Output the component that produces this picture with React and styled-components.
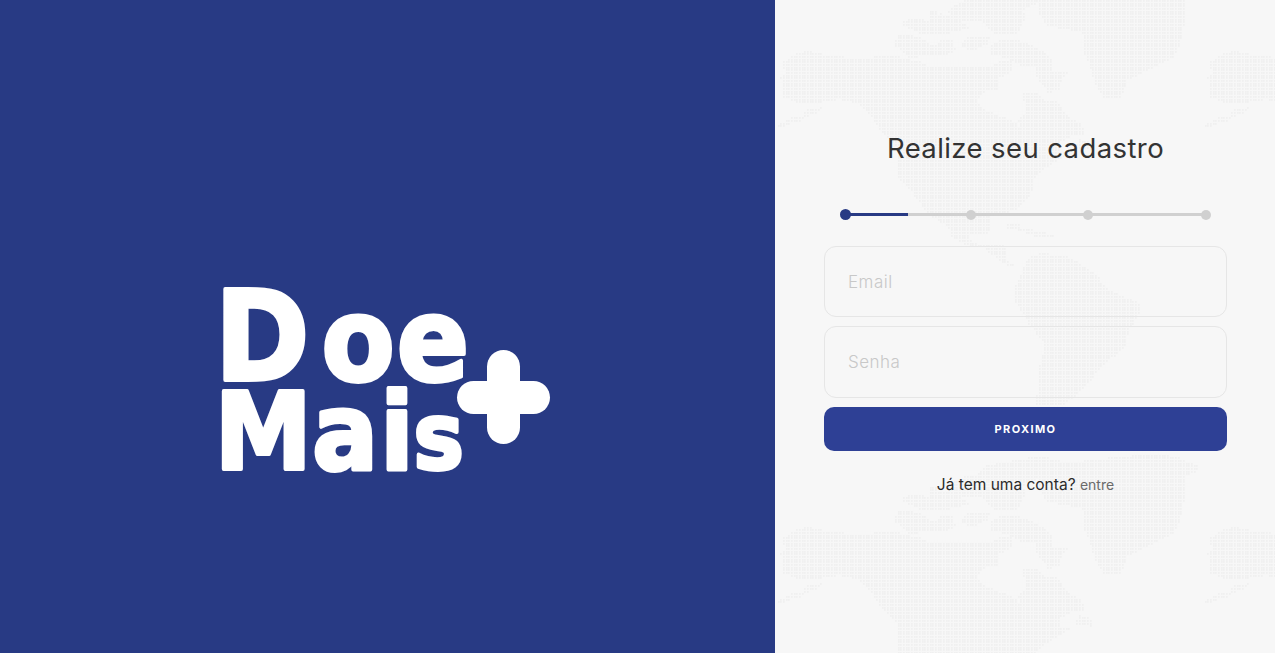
import React, { useMemo } from "react";
import styled, { createGlobalStyle } from "styled-components";

const BLUE = "#283a84";
const BUTTON_BLUE = "#2e4095";

const GlobalStyle = createGlobalStyle`
html,body{margin:0;padding:0;height:100%;}
body{font-family:"Inter","Liberation Sans",sans-serif;background:#f7f7f7;}
#root{height:100%;}
*{box-sizing:border-box;}
`;

const Page = styled.div`
display:flex;
width:100%;
height:100vh;
min-height:653px;
overflow:hidden;
`;

const BrandPanel = styled.div`
width:775px;
flex:none;
background:${BLUE};
display:flex;
align-items:flex-start;
padding:270px 0 0 200px;
`;

const LogoSvg = styled.svg`
display:block;
overflow:visible;
`;

const LogoWord = styled.text`
font-family:"DejaVu Sans",sans-serif;
font-weight:700;
fill:#fff;
stroke:#fff;
stroke-width:4px;
stroke-linejoin:round;
`;

const FormPanel = styled.div`
position:relative;
flex:1;
background:#f7f7f7;
padding:128px 48px 0 49px;
overflow:hidden;
`;

const MapSvg = styled.svg`
position:absolute;
top:0;
left:0;
`;

const FormColumn = styled.form`
position:relative;
display:flex;
flex-direction:column;
`;

const Title = styled.h1`
margin:0;
height:40px;
line-height:40px;
text-align:center;
font-family:"Inter",sans-serif;
font-size:27.5px;
font-weight:400;
letter-spacing:0.4px;
color:#333;
`;

const Stepper = styled.div`
position:relative;
display:grid;
grid-template-columns:126px 117px 118px 10px;
align-items:center;
width:371px;
height:11px;
margin:41px 0 26px 16px;
&::before{
content:"";
position:absolute;
left:5px;
right:5px;
top:4px;
height:3px;
background:#d0d0d0;
}
`;

const StepFill = styled.span`
position:absolute;
left:5px;
top:4px;
height:3px;
background:${BLUE};
`;

const StepDot = styled.span`
position:relative;
display:block;
width:${({ $active }) => ($active ? "11px" : "10px")};
height:${({ $active }) => ($active ? "11px" : "10px")};
border-radius:50%;
background:${({ $active }) => ($active ? BLUE : "#d0d0d0")};
`;

const Field = styled.input`
display:block;
width:100%;
height:${({ $tall }) => ($tall ? "72px" : "71px")};
margin-bottom:9px;
padding:0 23px;
border:1px solid #e6e6e6;
border-radius:12px;
background:transparent;
outline:none;
font-family:"Inter",sans-serif;
font-size:17px;
font-weight:300;
letter-spacing:0.5px;
color:#333;
&::placeholder{color:#c8c8c8;opacity:1;}
`;

const NextButton = styled.button`
height:44px;
border:none;
border-radius:10px;
background:${BUTTON_BLUE};
color:#fff;
font-family:"Inter",sans-serif;
font-size:11px;
font-weight:700;
letter-spacing:1.4px;
cursor:pointer;
`;

const Footer = styled.p`
margin:24px 0 0;
text-align:center;
line-height:20px;
font-family:"Inter",sans-serif;
font-size:15.5px;
color:#2b2b2b;
`;

const FooterLink = styled.a`
font-size:14px;
color:#6a6a6a;
text-decoration:none;
cursor:pointer;
`;

// continent outlines, 3x px, y measured from the top of the panel
const CONTINENTS = [
  // alaska + canada + usa + central america
  [[25,187],[55,167],[100,150],[135,162],[190,167],[240,177],[285,174],[310,164],[370,170],[415,182],[450,190],[470,202],[520,202],[560,202],[600,197],[640,202],[680,182],[715,187],[710,217],[670,232],[670,267],[630,272],[605,302],[625,327],[660,342],[700,357],[725,372],[738,402],[730,362],[750,342],[745,282],[790,282],[815,307],[850,307],[880,352],[915,367],[930,402],[880,412],[855,427],[855,452],[895,452],[860,477],[815,502],[780,531],[770,580],[725,630],[650,650],[650,680],[640,700],[580,700],[590,730],[690,737],[695,780],[725,802],[700,800],[625,745],[580,738],[530,712],[520,680],[470,650],[435,610],[405,570],[370,531],[365,442],[335,412],[310,382],[290,352],[260,317],[230,307],[190,297],[140,307],[70,312],[40,297],[25,292],[25,252],[15,232],[30,222],[25,202]],
  // alaska peninsula
  [[0,387],[20,370],[50,352],[85,347],[100,327],[140,322],[135,337],[90,352],[80,364],[45,372],[15,387]],
  // newfoundland
  [[900,437],[915,417],[945,427],[955,452],[910,447]],
  // baffin
  [[645,140],[680,115],[750,125],[800,150],[830,175],[830,215],[880,215],[860,245],[855,272],[820,277],[790,240],[780,202],[740,200],[700,175],[650,165]],
  // arctic islands
  [[380,70],[410,55],[460,60],[500,42],[560,65],[590,85],[520,100],[430,100],[400,85]],
  [[355,135],[370,100],[430,110],[480,140],[500,120],[530,115],[540,150],[520,165],[480,165],[430,170],[415,182],[380,150]],
  [[560,130],[580,110],[645,110],[640,130],[600,150],[565,145]],
  [[465,28],[490,28],[490,55],[462,55]],
  [[520,30],[570,0],[800,0],[745,30],[750,60],[730,100],[660,100],[625,65],[530,60]],
  [[640,-34],[800,-59],[880,-39],[800,0],[600,0]],
  // greenland
  [[880,-39],[1050,-59],[1140,-69],[1215,-54],[1280,-24],[1235,0],[1225,100],[1200,170],[1130,205],[1060,240],[1035,297],[990,297],[960,250],[945,200],[925,150],[925,100],[815,75],[790,35],[790,5]],
  // caribbean
  [[690,670],[725,668],[740,685],[800,695],[850,712],[790,712],[740,695],[695,682]],
  // south america
  [[795,760],[880,770],[960,820],[1000,870],[1095,910],[1095,940],[1065,990],[1050,1039],[985,1099],[920,1169],[870,1214],[780,1214],[790,1169],[795,1099],[810,1029],[765,979],[745,940],[715,900],[720,860],[760,775]],
];

const TILE_W = 427;
const TILE_H = 476;
const GRID = 8 / 3;

const inside = (x, y, poly) => {
  let hit = false;
  for (let i = 0, j = poly.length - 1; i < poly.length; j = i++) {
    const [xi, yi] = poly[i];
    const [xj, yj] = poly[j];
    if (yi > y !== yj > y && x < ((xj - xi) * (y - yi)) / (yj - yi) + xi) hit = !hit;
  }
  return hit;
};

const buildDots = () => {
  let d = "";
  for (let row = -10; row * GRID < 420; row++) {
    for (let col = 0; col * GRID < TILE_W; col++) {
      const x = col * GRID;
      const y = row * GRID;
      if (CONTINENTS.some((p) => inside((x + 1) * 3, (y + 1) * 3, p))) {
        d += `M${Math.round(x)} ${Math.round(y)}h1.7v1.7h-1.7z`;
      }
    }
  }
  return d;
};

const WorldMap = () => {
  const dots = useMemo(buildDots, []);
  const tiles = [[0, 0], [TILE_W, 0], [0, TILE_H], [TILE_W, TILE_H]];
  return (
    <MapSvg width="500" height="653" viewBox="0 0 500 653" aria-hidden="true">
      {tiles.map(([x, y]) => (
        <path key={`${x}-${y}`} d={dots} transform={`translate(${x} ${y})`} fill="#f0f0f0" />
      ))}
    </MapSvg>
  );
};

// one <text> per word, every letter placed on its own so the word stays real text
const Logo = () => (
  <LogoSvg width="370" height="220" viewBox="0 0 370 220" role="img" aria-label="Doe Mais+">
    <LogoWord transform="translate(0 110) scale(0.92 1)" fontSize="116">
      <tspan x="16" fontSize="124">D</tspan>
      <tspan x="132">o</tspan>
      <tspan x="214">e</tspan>
    </LogoWord>
    <LogoWord transform="translate(0 199) scale(0.92 1)" fontSize="106">
      <tspan x="16">M</tspan>
      <tspan x="122">a</tspan>
      <tspan x="196">i</tspan>
      <tspan x="232" fontSize="92">s</tspan>
    </LogoWord>
    <rect x="257" y="111" width="93" height="33" rx="16.5" fill="#fff" />
    <rect x="287" y="80" width="33" height="94" rx="16.5" fill="#fff" />
  </LogoSvg>
);

const App = () => {
  return (
    <Page>
      <GlobalStyle />
      <BrandPanel>
        <Logo />
      </BrandPanel>
      <FormPanel>
        <WorldMap />
        <FormColumn onSubmit={(e) => e.preventDefault()}>
          <Title>Realize seu cadastro</Title>
          <Stepper>
            <StepFill style={{ width: 63 }} />
            <StepDot $active />
            <StepDot />
            <StepDot />
            <StepDot />
          </Stepper>
          <Field type="email" placeholder="Email" />
          <Field $tall type="password" placeholder="Senha" />
          <NextButton type="submit">PROXIMO</NextButton>
          <Footer>
            Já tem uma conta? <FooterLink>entre</FooterLink>
          </Footer>
        </FormColumn>
      </FormPanel>
    </Page>
  );
};

export default App;
